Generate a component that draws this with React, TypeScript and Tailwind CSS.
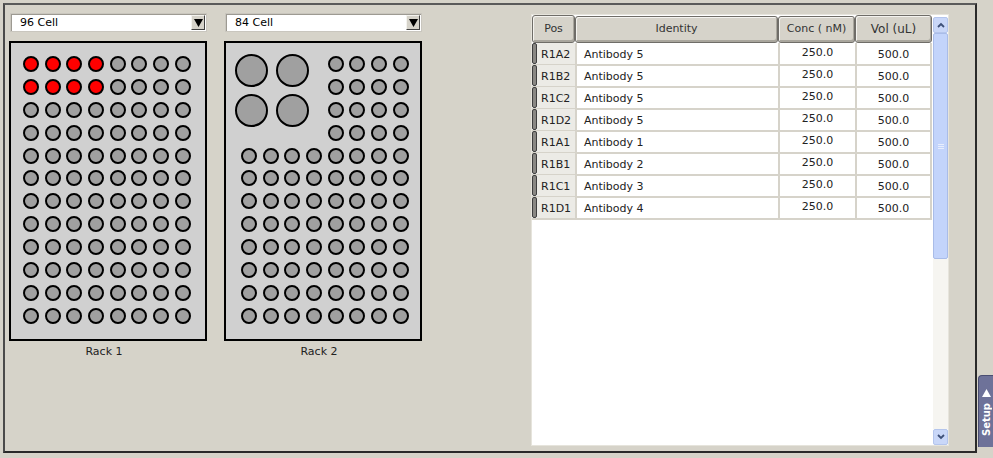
import React from 'react';

// Plate layout screen: two racks on the left, sample table on the right.

const ROWS: [string, string][] = [
  ['R1A2', 'Antibody 5'],
  ['R1B2', 'Antibody 5'],
  ['R1C2', 'Antibody 5'],
  ['R1D2', 'Antibody 5'],
  ['R1A1', 'Antibody 1'],
  ['R1B1', 'Antibody 2'],
  ['R1C1', 'Antibody 3'],
  ['R1D1', 'Antibody 4'],
];

function Well({ red = false, big = false }: { red?: boolean; big?: boolean }) {
  return (
    <div
      className={`rounded-full border-2 border-black ${big ? 'h-[33px] w-[33px]' : 'h-4 w-4'} ${
        red ? 'bg-[#ff0000]' : 'bg-[#a0a0a0]'
      }`}
    />
  );
}

function Select({ label }: { label: string }) {
  return (
    <div className="ml-[1px] flex h-[19px] w-[197px] items-center border border-[#c9c6be] bg-white pl-[9px] shadow-[inset_1px_1px_0_#9d9a92]">
      <span className="flex-1 text-[11px] leading-none text-black">{label}</span>
      <div className="mr-[1px] flex h-[15px] w-[14px] items-center justify-center border border-b-[#404040] border-l-[#f4f3ef] border-r-[#404040] border-t-[#f4f3ef] bg-[#d6d3ca]">
        <svg width="9" height="8" viewBox="0 0 9 8">
          <polygon points="0,0 9,0 4.5,8" fill="#000" />
        </svg>
      </div>
    </div>
  );
}

function Rack1() {
  const wells = [];
  for (let r = 0; r < 12; r++) {
    for (let c = 0; c < 8; c++) {
      wells.push(<Well key={`${r}-${c}`} red={r < 2 && c < 4} />);
    }
  }
  return (
    <div className="h-[300px] w-[198px] border-2 border-black bg-[#d0d0d0] pl-[12px] pt-[13px]">
      <div className="grid grid-cols-[repeat(8,16px)] gap-x-[5.7px] gap-y-[6.9px]">{wells}</div>
    </div>
  );
}

function Rack2() {
  const small = [];
  for (let i = 0; i < 80; i++) small.push(<Well key={i} />);
  return (
    <div className="h-[300px] w-[198px] border-2 border-black bg-[#d0d0d0] pl-[15px] pt-[13px]">
      <div className="grid grid-cols-[repeat(8,16px)] gap-x-[5.7px] gap-y-[6.9px]">
        <div className="col-span-4 row-span-4">
          <div className="-ml-[6px] -mt-[2px] grid grid-cols-[33px_33px] gap-x-[8px] gap-y-[7px]">
            <Well big />
            <Well big />
            <Well big />
            <Well big />
          </div>
        </div>
        {small}
      </div>
    </div>
  );
}

function RackColumn({ select, label, children }: { select: string; label: string; children: React.ReactNode }) {
  return (
    <div className="flex w-[198px] flex-col">
      <Select label={select} />
      <div className="mt-[9px]">{children}</div>
      <div className="mt-[3px] pr-[8px] text-center text-[11px] text-[#222]">{label}</div>
    </div>
  );
}

function HeadCell({ children, className = '' }: { children: React.ReactNode; className?: string }) {
  return (
    <div
      className={`flex items-center justify-center rounded-[3px] border border-[#6f6d68] bg-[#d6d3ca] text-[#333] shadow-[inset_1px_1px_0_#f4f3ef,inset_-1px_-2px_0_#a9a69d] ${className}`}
    >
      {children}
    </div>
  );
}

function ScrollButton({ up }: { up: boolean }) {
  return (
    <div className="flex h-[16px] w-[15px] items-center justify-center rounded-[2px] border border-[#b4c5ec] bg-[#c9d7f8]">
      <svg width="8" height="6" viewBox="0 0 8 6">
        <polyline
          points={up ? '1,5 4,2 7,5' : '1,1 4,4 7,1'}
          fill="none"
          stroke="#3d5078"
          strokeWidth="1.8"
        />
      </svg>
    </div>
  );
}

function Scrollbar() {
  return (
    <div className="mt-[2px] flex h-[428px] w-[15px] flex-col">
      <ScrollButton up />
      <div className="flex h-[226px] items-center justify-center rounded-[2px] border border-[#a9bce8] bg-[#c3d4fb]">
        <div className="flex flex-col gap-[1px]">
          <div className="h-[1px] w-[6px] bg-[#e8eefc]" />
          <div className="h-[1px] w-[6px] bg-[#e8eefc]" />
          <div className="h-[1px] w-[6px] bg-[#e8eefc]" />
        </div>
      </div>
      <div className="flex-1 bg-[#f6f5f1]" />
      <ScrollButton up={false} />
    </div>
  );
}

function SampleTable() {
  return (
    <div className="mt-[9px] flex h-[432px] w-[418px] border border-[#e6e4dc] bg-white">
      <div className="w-[400px]">
        <div className="grid h-[28px] grid-cols-[43px_203px_77px_77px] text-[11px]">
          <HeadCell>Pos</HeadCell>
          <HeadCell className="mt-[1px]">Identity</HeadCell>
          <HeadCell className="mt-[1px]">Conc ( nM)</HeadCell>
          <HeadCell className="text-[12px]">Vol (uL)</HeadCell>
        </div>
        {ROWS.map(([pos, name]) => (
          <div key={pos} className="grid h-[22px] grid-cols-[43px_203px_77px_77px] text-[11px] text-[#222]">
            <div className="flex border-b-2 border-[#d6d3ca]">
              <div className="w-[5px] rounded-[2px] border border-[#3f3f3f] bg-[#8a8884]" />
              <div className="flex flex-1 items-center bg-[#ecebe6] pl-[4px] pt-[3px]">{pos}</div>
            </div>
            <div className="flex items-center border-b-2 border-l-2 border-[#d6d3ca] pl-[7px] pt-[4px]">{name}</div>
            <div className="flex items-center justify-center border-b-2 border-l-2 border-[#d6d3ca] pb-[1px]">
              250.0
            </div>
            <div className="flex items-center justify-center border-b-2 border-l-2 border-r-2 border-[#d6d3ca] pt-[3px]">
              500.0
            </div>
          </div>
        ))}
      </div>
      <div className="ml-[1px]">
        <Scrollbar />
      </div>
    </div>
  );
}

export default function App() {
  return (
    <div className="relative h-[458px] w-[993px] overflow-hidden bg-[#d6d3c9] pl-[3px] pt-[3px] font-['DejaVu_Sans',Tahoma,sans-serif]">
      <div className="flex h-[450px] w-[974px] border-2 border-b-[#2a2a2a] border-l-[#4a4a4a] border-r-[#2a2a2a] border-t-[#5a5a5a] pl-[4px]">
        <div className="mt-[8px] flex gap-[17px]">
          <RackColumn select="96 Cell" label="Rack 1">
            <Rack1 />
          </RackColumn>
          <RackColumn select="84 Cell" label="Rack 2">
            <Rack2 />
          </RackColumn>
        </div>
        <div className="ml-[109px]">
          <SampleTable />
        </div>
      </div>

      {/* side tab */}
      <div className="absolute left-[978px] top-[375px] flex h-[72px] w-[16px] flex-col items-center rounded-tl-[4px] border-l border-t border-[#4b4e72] bg-[#6e7299] pt-[13px]">
        <svg width="9" height="8" viewBox="0 0 9 8">
          <polygon points="4.5,0 9,8 0,8" fill="#fff" />
        </svg>
        <div className="mt-[6px] rotate-180 text-[10px] font-bold leading-none text-white [writing-mode:vertical-rl]">
          Setup
        </div>
      </div>
    </div>
  );
}
